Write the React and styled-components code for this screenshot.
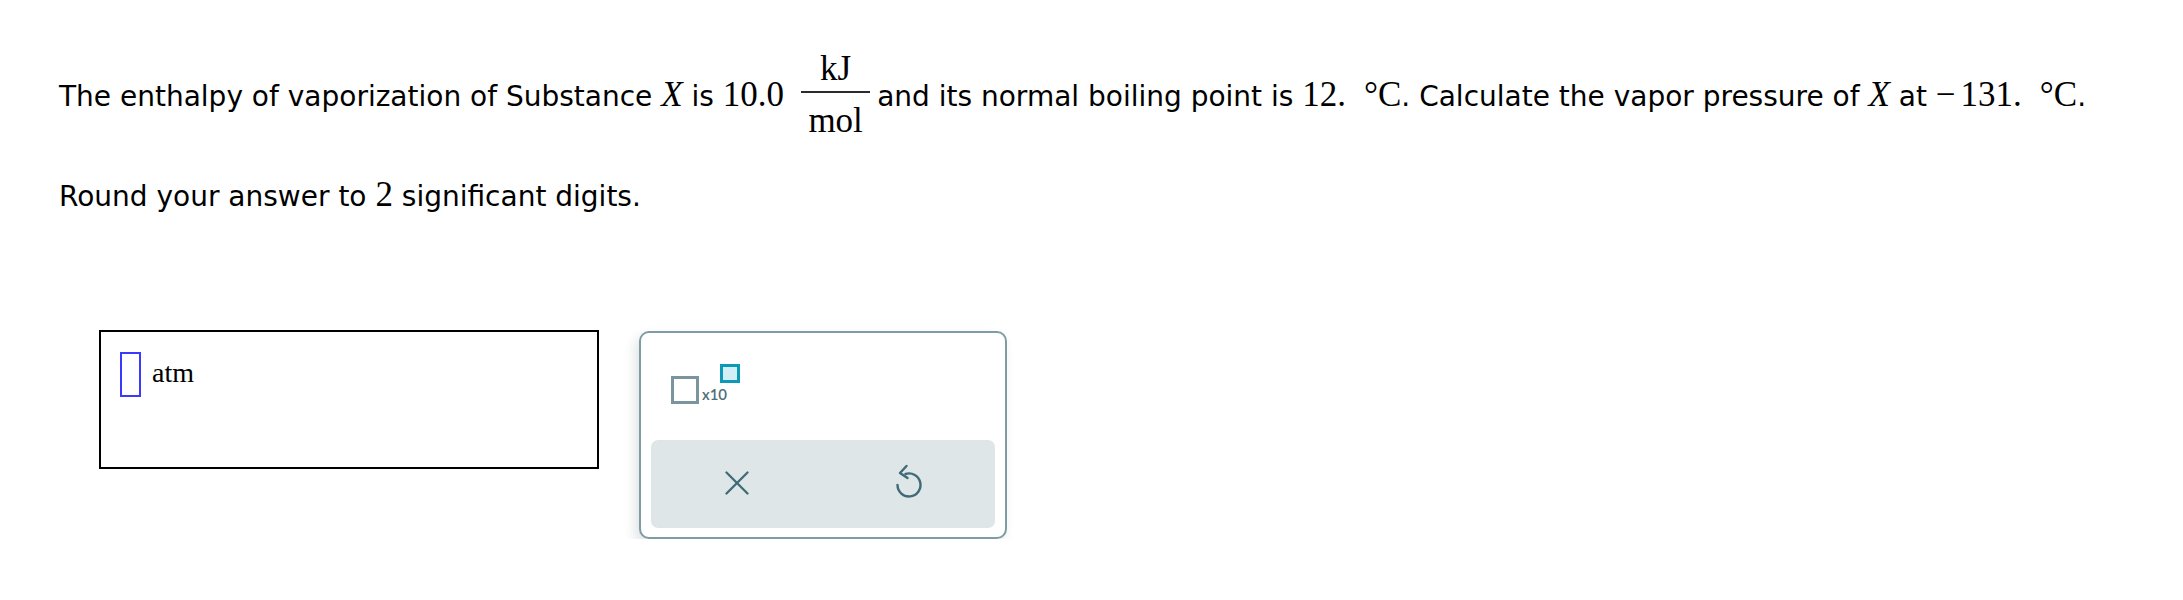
import React from 'react';
import styled, { createGlobalStyle } from 'styled-components';

const GlobalStyle = createGlobalStyle`
  body {
    margin: 0;
    background: #ffffff;
  }
`;

const Page = styled.div`
  padding: 51px 0 0 59px;
  font-family: 'DejaVu Sans', Verdana, sans-serif;
  font-size: 28px;
  color: #000;
`;

const Line = styled.p`
  margin: ${(p) => p.$top || 0}px 0 0;
  line-height: 32px;
  white-space: nowrap;
`;

const M = styled.span`
  font-family: 'Liberation Serif', 'Times New Roman', serif;
  font-size: 35px;
  font-style: ${(p) => (p.$italic ? 'italic' : 'normal')};
`;

const Unit = styled.span`
  margin-left: 18px;
`;

const Minus = styled.span`
  margin-right: 5px;
`;

const Frac = styled.span`
  display: inline-flex;
  flex-direction: column;
  vertical-align: 26px;
  margin: 0 7px 0 17px;
  font-family: 'Liberation Serif', 'Times New Roman', serif;
  font-size: 35px;
  line-height: 35px;
  text-align: center;
`;

const Num = styled.span`
  padding: 0 19px 5px;
  border-bottom: 2px solid #2b2b2b;
`;

const Den = styled.span`
  padding-top: 10px;
`;

const AnswerRow = styled.div`
  display: flex;
  align-items: flex-start;
  gap: 40px;
  margin: 117px 0 0 40px;
`;

const AnswerBox = styled.div`
  box-sizing: border-box;
  width: 500px;
  height: 139px;
  border: 2px solid #000;
  padding: 20px 19px;
  display: flex;
  align-items: flex-start;
`;

const InputRow = styled.div`
  display: flex;
  align-items: center;
  gap: 11px;
`;

const Cursor = styled.span`
  box-sizing: border-box;
  width: 21px;
  height: 45px;
  border: 2px solid #3a3aff;
`;

const UnitText = styled.span`
  font-family: 'Liberation Serif', 'Times New Roman', serif;
  font-size: 28px;
  line-height: 30px;
  padding-bottom: 4px;
`;

const Panel = styled.div`
  box-sizing: border-box;
  width: 368px;
  height: 208px;
  margin-top: 1px;
  border: 2px solid #7f9ca4;
  border-radius: 10px;
  background: #fff;
  box-shadow: -4px 6px 12px rgba(40, 60, 70, 0.14);
  padding: 0 10px 9px;
  display: flex;
  flex-direction: column;
`;

const KeyRow = styled.div`
  height: 107px;
  display: flex;
  align-items: flex-start;
  padding: 31px 0 0 20px;
  box-sizing: border-box;
`;

const TemplateKey = styled.button`
  border: none;
  background: transparent;
  padding: 0;
  display: flex;
  align-items: flex-end;
  cursor: pointer;
`;

const BaseSlot = styled.span`
  box-sizing: border-box;
  width: 28px;
  height: 28px;
  margin-top: 12px;
  border: 3px solid #7a959d;
`;

const TimesTen = styled.span`
  font-family: Lato, 'Open Sans', sans-serif;
  font-size: 15px;
  font-weight: 600;
  line-height: 15px;
  color: #4e6e78;
  margin: 0 0 2px 3px;
`;

const ExpSlot = styled.span`
  box-sizing: border-box;
  width: 20px;
  height: 19px;
  align-self: flex-start;
  margin-left: -7px;
  border: 3px solid #0a9ab6;
  background: #d2eff5;
`;

const ActionBar = styled.div`
  flex: 1;
  display: grid;
  grid-template-columns: 1fr 1fr;
  background: #dfe6e8;
  border-radius: 7px;
`;

const ActionButton = styled.button`
  border: none;
  background: transparent;
  display: flex;
  align-items: center;
  justify-content: center;
  padding: 0 0 ${(p) => p.$lift || 0}px;
  color: #3e6b77;
  cursor: pointer;
`;

function ClearIcon() {
  return (
    <svg width="24" height="24" viewBox="0 0 24 24" fill="none" stroke="currentColor" strokeWidth="2.3" strokeLinecap="round">
      <path d="M1.5 1.5 22.5 22.5" />
      <path d="M22.5 1.5 1.5 22.5" />
    </svg>
  );
}

function UndoIcon() {
  return (
    <svg width="28" height="36" viewBox="0 0 28 36" fill="none" stroke="currentColor" strokeWidth="2.4" strokeLinecap="round" strokeLinejoin="round">
      <path d="M2.5 22 A11.5 11.5 0 1 0 10.5 11" />
      <path d="M11.5 3 L5 10 L12.5 15" />
    </svg>
  );
}

export default function App() {
  return (
    <Page>
      <GlobalStyle />
      <Line>
        The enthalpy of vaporization of Substance <M $italic>X</M> is <M>10.0</M>
        <Frac>
          <Num>kJ</Num>
          <Den>mol</Den>
        </Frac>
        and its normal boiling point is <M>12.<Unit>°C</Unit></M>. Calculate the vapor pressure of{' '}
        <M $italic>X</M> at <M><Minus>−</Minus>131.<Unit>°C</Unit></M>.
      </Line>
      <Line $top={41}>
        Round your answer to <M>2</M> significant digits.
      </Line>
      <AnswerRow>
        <AnswerBox>
          <InputRow>
            <Cursor />
            <UnitText>atm</UnitText>
          </InputRow>
        </AnswerBox>
        <Panel>
          <KeyRow>
            <TemplateKey aria-label="scientific notation">
              <BaseSlot />
              <TimesTen>x10</TimesTen>
              <ExpSlot />
            </TemplateKey>
          </KeyRow>
          <ActionBar>
            <ActionButton aria-label="clear" $lift={2}>
              <ClearIcon />
            </ActionButton>
            <ActionButton aria-label="undo" $lift={6}>
              <UndoIcon />
            </ActionButton>
          </ActionBar>
        </Panel>
      </AnswerRow>
    </Page>
  );
}
